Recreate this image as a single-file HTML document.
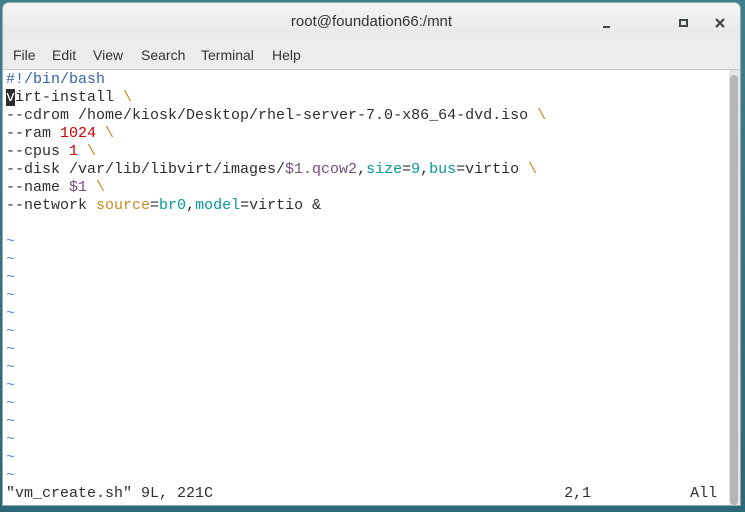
<!DOCTYPE html>
<html><head><style>
html,body{margin:0;padding:0;width:745px;height:512px;overflow:hidden;}
body{background:linear-gradient(#3d7f8f,#2c6878);}
.win{position:absolute;left:3px;top:3px;width:737px;height:502px;background:#fff;border-radius:6px 6px 0 0;overflow:hidden;box-shadow:0 0 0 1px #9aa;}
.title{height:35px;background:linear-gradient(#f4f4f4,#e8e8e8);text-align:center;font:15px "Liberation Sans",sans-serif;color:#2e3436;line-height:38px;position:relative;}
.menu{height:31px;background:#ececec;border-bottom:1px solid #c8c8c8;font:14px "Liberation Sans",sans-serif;color:#2e3436;position:relative;}
.menu span{position:absolute;top:9px;}
.term{position:absolute;left:3px;top:68px;width:723px;height:434px;font:15px/18px "Liberation Mono",monospace;color:#2e2e2e;white-space:pre;}
.sb{position:absolute;left:726px;top:67px;width:11px;height:435px;background:#e6e6e6;}
.thumb{position:absolute;left:1px;top:5px;width:8px;height:430px;background:#b5b5b5;border-radius:4px;}
.b{color:#3465a4}.o{color:#c88a20}.r{color:#cc0000}.p{color:#75507b}.c{color:#06989a}.t{color:#5b8fd0}
.cur{background:#2e2e2e;color:#fff}
</style></head><body>
<div class="win">
<div class="title">root@foundation66:/mnt
<div style="position:absolute;left:600px;top:23px;width:7px;height:2px;background:#3c4548"></div>
<div style="position:absolute;left:676px;top:16px;width:5px;height:4px;border:2px solid #3c4548"></div>
<svg style="position:absolute;left:712px;top:15px" width="10" height="10"><path d="M1 1L9 9M9 1L1 9" stroke="#3c4548" stroke-width="2.2"/></svg>
</div>
<div class="menu"><span style="left:10px">File</span><span style="left:49px">Edit</span><span style="left:90px">View</span><span style="left:138px">Search</span><span style="left:198px">Terminal</span><span style="left:269px">Help</span></div>
<div class="term"><span class="b">#!/bin/bash</span>
<span class="cur">v</span>irt-install <span class="o">\</span>
--cdrom /home/kiosk/Desktop/rhel-server-7.0-x86_64-dvd.iso <span class="o">\</span>
--ram <span class="r">1024</span> <span class="o">\</span>
--cpus <span class="r">1</span> <span class="o">\</span>
--disk /var/lib/libvirt/images/<span class="p">$1.qcow2</span>,<span class="c">size</span>=<span class="c">9</span>,<span class="c">bus</span>=virtio <span class="o">\</span>
--name <span class="p">$1</span> <span class="o">\</span>
--network <span class="o">source</span>=<span class="c">br0</span>,<span class="c">model</span>=virtio &amp;

<span class="t">~</span>
<span class="t">~</span>
<span class="t">~</span>
<span class="t">~</span>
<span class="t">~</span>
<span class="t">~</span>
<span class="t">~</span>
<span class="t">~</span>
<span class="t">~</span>
<span class="t">~</span>
<span class="t">~</span>
<span class="t">~</span>
<span class="t">~</span>
<span class="t">~</span>
"vm_create.sh" 9L, 221C                                       2,1           All</div>
<div class="sb"><div class="thumb"></div></div>
</div>
</body></html>
